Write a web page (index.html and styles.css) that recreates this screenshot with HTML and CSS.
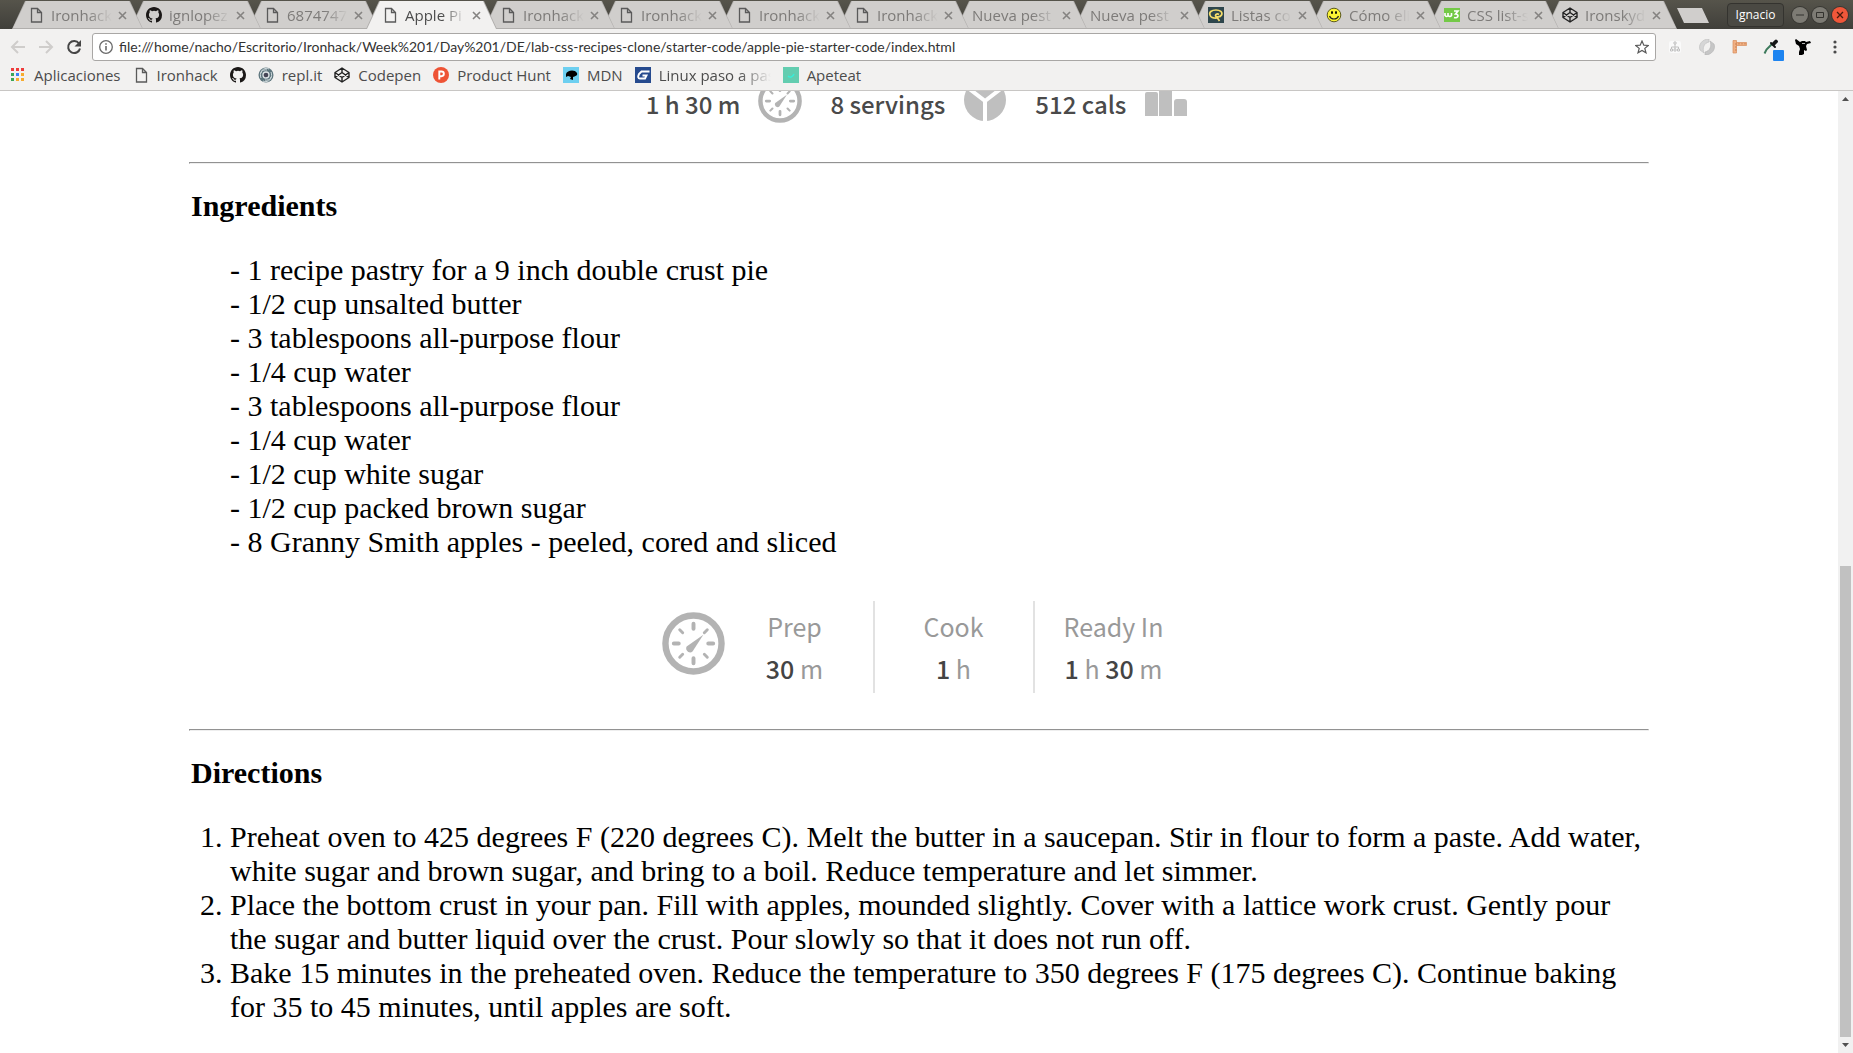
FILE: index.html
```html
<!DOCTYPE html>
<html lang="es">
<head>
<meta charset="utf-8">
<title>Apple Pie</title>
<link rel="stylesheet" href="styles.css">
</head>
<body>
<svg class="defs" aria-hidden="true">
  <symbol id="doc" viewBox="0 0 16 16"><path d="M3.5 1.5h6l4 4v9.500h-10zM9.500 1.500v4h4" fill="none" stroke="#5a5a5a" stroke-width="1.300"/></symbol>
  <symbol id="github" viewBox="0 0 16 16"><path fill="#1b1817" d="M8 0C3.580 0 0 3.580 0 8c0 3.540 2.290 6.530 5.470 7.590.4.070.550-.170.550-.380 0-.190-.010-.820-.010-1.490-2.010.370-2.530-.490-2.690-.940-.090-.230-.480-.940-.820-1.130-.280-.150-.680-.520-.010-.530.630-.010 1.080.580 1.230.820.720 1.210 1.870.870 2.330.660.070-.520.280-.870.510-1.070-1.780-.2-3.640-.890-3.640-3.950 0-.870.310-1.590.820-2.150-.080-.2-.360-1.020.080-2.120 0 0 .670-.210 2.200.820a7.500 7.500 0 0 1 4 0c1.530-1.040 2.200-.820 2.200-.820.440 1.100.160 1.920.080 2.120.510.560.820 1.270.820 2.150 0 3.070-1.870 3.750-3.650 3.950.290.250.540.730.540 1.480 0 1.070-.010 1.930-.010 2.200 0 .210.150.460.550.380A8 8 0 0 0 16 8c0-4.420-3.580-8-8-8z"/></symbol>
  <symbol id="codepen" viewBox="0 0 16 16"><path d="M8 1l7 4.500v5L8 15l-7-4.500v-5zM8 1v4.500M8 15v-4.500M1 5.500l7 5 7-5M1 10.500l7-5 7 5" fill="none" stroke="#222" stroke-width="1.400" stroke-linejoin="round"/></symbol>
  <symbol id="close" viewBox="0 0 9 9"><path d="M1 1l7 7M8 1l-7 7" stroke="#858381" stroke-width="1.600"/></symbol>
  <symbol id="clock" viewBox="0 0 64 64"><circle cx="32" cy="32" r="28.500" fill="none" stroke="#b3b3b3" stroke-width="6.500"/><g stroke="#b3b3b3" stroke-width="4" stroke-linecap="round"><path d="M32 12v5M32 47v5M12 32h5M47 32h5"/><path stroke-width="3" d="M18 18l3 3M43 43l3 3M18 46l3-3M43 21l3-3"/></g><path fill="#b3b3b3" d="M42 23L31 40c-3 3-8-1-6-5z"/></symbol>
</svg>

<header class="browser">
  <div class="titlebar">
    <nav class="tabs" aria-label="Pestañas">
      <div class="tab"><svg class="fav"><use href="#doc"/></svg><span class="title">Ironhack</span><button class="close" aria-label="Cerrar"><svg><use href="#close"/></svg></button></div>
      <div class="tab"><svg class="fav"><use href="#github"/></svg><span class="title">ignlopez</span><button class="close" aria-label="Cerrar"><svg><use href="#close"/></svg></button></div>
      <div class="tab"><svg class="fav"><use href="#doc"/></svg><span class="title">6874747</span><button class="close" aria-label="Cerrar"><svg><use href="#close"/></svg></button></div>
      <div class="tab active"><svg class="fav"><use href="#doc"/></svg><span class="title">Apple Pi</span><button class="close" aria-label="Cerrar"><svg><use href="#close"/></svg></button></div>
      <div class="tab"><svg class="fav"><use href="#doc"/></svg><span class="title">Ironhack</span><button class="close" aria-label="Cerrar"><svg><use href="#close"/></svg></button></div>
      <div class="tab"><svg class="fav"><use href="#doc"/></svg><span class="title">Ironhack</span><button class="close" aria-label="Cerrar"><svg><use href="#close"/></svg></button></div>
      <div class="tab"><svg class="fav"><use href="#doc"/></svg><span class="title">Ironhack</span><button class="close" aria-label="Cerrar"><svg><use href="#close"/></svg></button></div>
      <div class="tab"><svg class="fav"><use href="#doc"/></svg><span class="title">Ironhack</span><button class="close" aria-label="Cerrar"><svg><use href="#close"/></svg></button></div>
      <div class="tab"><span class="title">Nueva pest</span><button class="close" aria-label="Cerrar"><svg><use href="#close"/></svg></button></div>
      <div class="tab"><span class="title">Nueva pest</span><button class="close" aria-label="Cerrar"><svg><use href="#close"/></svg></button></div>
      <div class="tab"><svg class="fav" viewBox="0 0 16 16"><path fill="#2e464c" d="M0 0h16v16H0z"/><path d="M2.500 9C0 5 4 3 8 3s7 2 5.500 5-6 2-6 .5 2-2 3.500-1M2.500 9c1 2.500 5 2 7 2l2 3" fill="none" stroke="#f4dc6a" stroke-width="1.700"/></svg><span class="title">Listas co</span><button class="close" aria-label="Cerrar"><svg><use href="#close"/></svg></button></div>
      <div class="tab"><svg class="fav" viewBox="0 0 16 16"><circle cx="8" cy="8" r="6.800" fill="#fbf335" stroke="#5c5a1c"/><ellipse cx="6" cy="5.500" rx="1" ry="1.600"/><ellipse cx="10" cy="5.500" rx="1" ry="1.600"/><path d="M3.500 9c1.500 4 7.500 4 9 0" fill="none" stroke="#222" stroke-width="1.200"/></svg><span class="title">Cómo eli</span><button class="close" aria-label="Cerrar"><svg><use href="#close"/></svg></button></div>
      <div class="tab"><svg class="fav" viewBox="0 0 16 16"><path fill="#74c947" d="M0 1h16v14H0z"/><path d="M1 6v2.500q2 2 3 0V6v2.500q2 2 3.500 0V6M10 4h4l-2.500 3c4 0 3 5-1.500 3.500" fill="none" stroke="#fff" stroke-width="1.600"/></svg><span class="title">CSS list-s</span><button class="close" aria-label="Cerrar"><svg><use href="#close"/></svg></button></div>
      <div class="tab"><svg class="fav"><use href="#codepen"/></svg><span class="title">Ironskyd</span><button class="close" aria-label="Cerrar"><svg><use href="#close"/></svg></button></div>
    </nav>
    <button class="new-tab" aria-label="Nueva pestaña"></button>
    <div class="window-controls">
      <button class="profile">Ignacio</button>
      <button class="win" aria-label="Minimizar"><svg viewBox="0 0 16 16"><path d="M4 8h8" stroke="#33322e"/></svg></button>
      <button class="win" aria-label="Maximizar"><svg viewBox="0 0 16 16"><path d="M4.500 5.500h7v5h-7z" fill="none" stroke="#33322e"/></svg></button>
      <button class="win quit" aria-label="Cerrar ventana"><svg viewBox="0 0 16 16"><path d="M5 5l6 6M11 5l-6 6" stroke="#4a1a0c" stroke-width="1.300"/></svg></button>
    </div>
  </div>

  <div class="toolbar">
    <button class="nav" aria-label="Atrás"><svg viewBox="0 0 16 16"><path d="M15 8H2M8 2L2 8l6 6" fill="none" stroke="#cfcdcb" stroke-width="2"/></svg></button>
    <button class="nav" aria-label="Adelante"><svg viewBox="0 0 16 16"><path d="M1 8h13M8 2l6 6-6 6" fill="none" stroke="#cfcdcb" stroke-width="2"/></svg></button>
    <button class="nav" aria-label="Recargar"><svg viewBox="0 0 16 16"><path d="M13 4.500A6 6 0 1 0 14 9.500" fill="none" stroke="#454545" stroke-width="2"/><path d="M15 1v6.500H8.500z" fill="#454545"/></svg></button>
    <div class="omnibox">
      <svg class="info" viewBox="0 0 14 14"><circle cx="7" cy="7" r="6.300" fill="none" stroke="#6a6a6a" stroke-width="1.300"/><path d="M7 6v4.500M7 3.300v1.500" stroke="#6a6a6a" stroke-width="1.600"/></svg>
      <input class="url" type="text" aria-label="Dirección" value="file:///home/nacho/Escritorio/Ironhack/Week%201/Day%201/DE/lab-css-recipes-clone/starter-code/apple-pie-starter-code/index.html">
      <button class="star" aria-label="Añadir a marcadores"><svg viewBox="0 0 14 14"><path d="M7 1l1.800 4.200 4.500.3-3.500 2.900 1.200 4.400L7 10.400l-4 2.400 1.200-4.400L.7 5.500l4.500-.3z" fill="none" stroke="#5a5a5a" stroke-width="1.200"/></svg></button>
    </div>
    <div class="extensions">
      <button class="ext" aria-label="Mapa"><svg viewBox="0 0 16 16"><rect x="2" y="2" width="12" height="12" rx="2" fill="#fafafa"/><path d="M8 5v5M4.500 10V8h7v2" fill="none" stroke="#c0c0c0"/><path d="M7 3h2v2H7zM3.500 10h2v2h-2zM7 10h2v2H7zM10.500 10h2v2h-2z" fill="#fff" stroke="#c0c0c0"/></svg></button>
      <button class="ext" aria-label="Sincronizar"><svg viewBox="0 0 16 16"><path d="M10 0C3 0-1 6 1 11l4 3C3 9 5 4 10 3z" fill="#d6d6d6" stroke="#bcbcbc" stroke-width=".6"/><path d="M6 16c7 0 11-6 9-11l-4-3c2 5 0 10-5 11z" fill="#c6c6c6" stroke="#b4b4b4" stroke-width=".6"/></svg></button>
      <button class="ext" aria-label="Regla"><svg viewBox="0 0 16 16"><path d="M5 3.500h10.500v3H5z" fill="#f0b083" stroke="#d98c5c" stroke-width=".7"/><path d="M2 1.500h3.500V14H2z" fill="#f0b083" stroke="#d98c5c" stroke-width=".7"/><path d="M8 4v1.500M11 4v1.500M14 4v1.500M4 5h1.500M4 8h1.500M4 11h1.500" stroke="#b86b3e" stroke-width=".7"/></svg></button>
      <button class="ext picker" aria-label="Cuentagotas"><svg viewBox="0 0 16 16"><path d="M1.500 14.500l2-4L9 5" fill="none" stroke="#3e7a5c" stroke-width="2"/><path d="M8 4l4 4" stroke="#151515" stroke-width="2" stroke-linecap="round"/><path d="M10.500 5l2.500-2.500" stroke="#151515" stroke-width="3.800" stroke-linecap="round"/></svg></button>
      <button class="ext" aria-label="Ninja"><svg viewBox="0 0 16 16"><path d="M1 0l4 3 2-1h3l1 1 4-1 1 2-4 1-1 2 1 4-1 1-2-1 0 4-2 1-3 0 0-3 1-3-1-3-3-2-1-4z"/><path d="M7 4.500h3" stroke="#fff" stroke-width=".7"/></svg></button>
      <button class="ext" aria-label="Menú"><svg viewBox="0 0 16 16"><g fill="#4a4a4a"><circle cx="8" cy="3" r="1.600"/><circle cx="8" cy="8" r="1.600"/><circle cx="8" cy="13" r="1.600"/></g></svg></button>
    </div>
  </div>

  <nav class="bookmarks" aria-label="Marcadores">
    <a href="#"><svg viewBox="0 0 16 16"><path fill="#ee3b3b" d="M1 1h3v3H1zM6 1h3v3H6zM11 1h3v3h-3z"/><path fill="#3aa757" d="M1 6h3v3H1zM1 11h3v3H1z"/><path fill="#3b82f6" d="M6 6h3v3H6z"/><path fill="#f7ac2f" d="M11 6h3v3h-3zM6 11h3v3H6zM11 11h3v3h-3z"/></svg><span>Aplicaciones</span></a>
    <a href="#"><svg><use href="#doc"/></svg><span>Ironhack</span></a>
    <a href="#" aria-label="GitHub"><svg><use href="#github"/></svg></a>
    <a href="#"><svg viewBox="0 0 16 16"><circle cx="8" cy="8" r="7.500" fill="#5d757d"/><circle cx="8" cy="8" r="3" fill="#445" stroke="#dde4e6" stroke-width="1.300"/><path d="M3 11C1 6 4 2 9 3M13 5c2 5-1 9-6 8M5 14c4 2 8-1 8-4M11 2C7 0 3 3 3 6" fill="none" stroke="#d4dde0"/></svg><span>repl.it</span></a>
    <a href="#"><svg><use href="#codepen"/></svg><span>Codepen</span></a>
    <a href="#"><svg viewBox="0 0 16 16"><circle cx="8" cy="8" r="8" fill="#ee5335"/><path d="M6.300 12.500v-8h2.200a2.200 2.200 0 0 1 0 4.700H6.300" fill="none" stroke="#fff" stroke-width="1.900"/></svg><span>Product Hunt</span></a>
    <a href="#"><svg viewBox="0 0 16 16"><path fill="#6dcff0" d="M0 0h16v16H0z"/><path d="M3 7c1-4 9-5 11-1 1 3-2 3-4 4v3L7 12l1-2-3-1-2 1z"/></svg><span>MDN</span></a>
    <a href="#"><svg viewBox="0 0 16 16"><path fill="#264a8e" d="M0 0h16v16H0z"/><path d="M14.500 4.500H6.500L4 7q-2 4.500 1 4.500h5l1.500-3H7.500" fill="none" stroke="#fff" stroke-width="1.900"/></svg><span class="long">Linux paso a pas</span></a>
    <a href="#"><svg viewBox="0 0 16 16"><path fill="#63cdb0" d="M0 0h16v16H0z"/><path d="M5 9c2 2 5 1 6-2" fill="none" stroke="#35f0dc" stroke-width="1.300"/></svg><span>Apeteat</span></a>
  </nav>
</header>

<div class="viewport">
  <main class="page">
    <div class="summary">
      <div class="fact"><span>1 h 30 m</span><svg><use href="#clock"/></svg></div>
      <div class="fact"><span>8 servings</span><svg viewBox="0 0 44 44"><circle cx="22" cy="21" r="21" fill="#bfbfbf"/><path d="M22 44V22L0 5M22 22L44 5" fill="none" stroke="#fff" stroke-width="4"/></svg></div>
      <div class="fact"><span>512 cals</span><svg viewBox="0 0 44 44"><path fill="#bfbfbf" d="M1 37V15q0-2 2-2h9q2 0 2 2v22zM15 37V6h13v31zM30 37V23q0-3 3-3h7q3 0 3 3v14z"/></svg></div>
    </div>
    <hr>
    <section>
      <h2>Ingredients</h2>
      <ul class="ingredients">
        <li>- 1 recipe pastry for a 9 inch double crust pie</li>
        <li>- 1/2 cup unsalted butter</li>
        <li>- 3 tablespoons all-purpose flour</li>
        <li>- 1/4 cup water</li>
        <li>- 3 tablespoons all-purpose flour</li>
        <li>- 1/4 cup water</li>
        <li>- 1/2 cup white sugar</li>
        <li>- 1/2 cup packed brown sugar</li>
        <li>- 8 Granny Smith apples - peeled, cored and sliced</li>
      </ul>
    </section>
    <div class="times">
      <svg><use href="#clock"/></svg>
      <div class="time"><span>Prep</span><span><b>30</b> m</span></div>
      <div class="time"><span>Cook</span><span><b>1</b> h</span></div>
      <div class="time"><span>Ready In</span><span><b>1</b> h <b>30</b> m</span></div>
    </div>
    <hr>
    <section>
      <h2>Directions</h2>
      <ol class="directions">
        <li>Preheat oven to 425 degrees F (220 degrees C). Melt the butter in a saucepan. Stir in flour to form a paste. Add water, white sugar and brown sugar, and bring to a boil. Reduce temperature and let simmer.</li>
        <li>Place the bottom crust in your pan. Fill with apples, mounded slightly. Cover with a lattice work crust. Gently pour the sugar and butter liquid over the crust. Pour slowly so that it does not run off.</li>
        <li>Bake 15 minutes in the preheated oven. Reduce the temperature to 350 degrees F (175 degrees C). Continue baking for 35 to 45 minutes, until apples are soft.</li>
      </ol>
    </section>
  </main>
  <div class="scrollbar" aria-hidden="true">
    <svg viewBox="0 0 15 16"><path d="M4 10h7l-3.500-4z" fill="#505050"/></svg>
    <div class="track"><div class="thumb"></div></div>
    <svg viewBox="0 0 15 16"><path d="M4 6h7l-3.500 4z" fill="#505050"/></svg>
  </div>
</div>
</body>
</html>
```
FILE: styles.css
```css
* { box-sizing: border-box; }

body {
  margin: 0;
  height: 100vh;
  display: flex;
  flex-direction: column;
  overflow: hidden;
  background: #fff;
}

button {
  border: 0;
  padding: 0;
  background: none;
  font: inherit;
  color: inherit;
}

svg { display: block; flex: none; }
.defs { position: absolute; width: 0; height: 0; }

/* Browser frame */
.browser {
  flex: none;
  font: 15px/20px "Open Sans", "Noto Sans", sans-serif;
  color: #4c4c4c;
  background: #f2f1f0;
  border-bottom: 1px solid #c8c6c4;
}

.titlebar {
  display: flex;
  height: 29px;
  padding: 1px 5px 0 12px;
  background: linear-gradient(#56544b, #403f3a);
}

.tabs { display: flex; min-width: 0; }

.tab {
  position: relative;
  isolation: isolate;
  width: 131px;
  min-width: 0;
  display: flex;
  align-items: center;
  padding: 0 16px;
  margin-right: -13px;
  color: #7d7b79;
}
.tab:last-child { margin-right: 0; }

.tab::before,
.tab::after {
  content: "";
  position: absolute;
  inset: 0;
  z-index: -1;
  background: #b0aeac;
  clip-path: polygon(0 100%, 13px 0, calc(100% - 13px) 0, 100% 100%);
}
.tab::after { inset: 0 1px 1px; background: #d0cecc; }

.tab:nth-child(1) { z-index: 14; }
.tab:nth-child(2) { z-index: 13; }
.tab:nth-child(3) { z-index: 12; }
.tab:nth-child(4) { z-index: 20; }
.tab:nth-child(5) { z-index: 10; }
.tab:nth-child(6) { z-index: 9; }
.tab:nth-child(7) { z-index: 8; }
.tab:nth-child(8) { z-index: 7; }
.tab:nth-child(9) { z-index: 6; }
.tab:nth-child(10) { z-index: 5; }
.tab:nth-child(11) { z-index: 4; }
.tab:nth-child(12) { z-index: 3; }
.tab:nth-child(13) { z-index: 2; }

.tab.active { color: #4c4c4c; }
.tab.active::after { inset: 0 1px; background: #f2f1f0; }

.fav { width: 16px; height: 16px; margin-right: 7px; }

.title {
  flex: 1;
  white-space: nowrap;
  mask-image: linear-gradient(to left, transparent 6px, #000 30px);
}

.close svg { width: 9px; height: 9px; }

.new-tab {
  flex: none;
  width: 32px;
  height: 15px;
  margin-top: 7px;
  background: #d0cecc;
  clip-path: polygon(0 0, 25px 0, 100% 100%, 7px 100%);
}

.window-controls {
  flex: none;
  display: flex;
  align-items: center;
  gap: 4px;
  margin-left: auto;
}

.profile {
  height: 24px;
  width: 57px;
  margin-right: 4px;
  border: 1px solid #34332f;
  border-radius: 4px;
  background: #4a4943;
  color: #fff;
  font-size: 12px;
}

.win {
  width: 16px;
  height: 16px;
  border-radius: 50%;
  background: #7d7b74;
  box-shadow: 0 0 0 1px #383733;
}
.quit { background: #f0573a; }

.toolbar {
  display: flex;
  align-items: center;
  padding: 4px 10px 0;
}

.nav { width: 16px; margin-right: 12px; }
.nav svg { width: 16px; height: 16px; }
.nav:nth-child(3) { margin-right: 10px; }

.omnibox {
  flex: 1;
  display: flex;
  align-items: center;
  height: 28px;
  padding: 0 6px;
  border: 1px solid #a9a7a5;
  border-radius: 3px;
  background: #fff;
}
.info { width: 14px; height: 14px; }

.url {
  flex: 1;
  min-width: 0;
  padding: 0 6px;
  border: 0;
  outline: 0;
  background: none;
  font: 14px/20px Lato, "Open Sans", sans-serif;
  color: #333;
}
.star svg { width: 14px; height: 14px; }

.extensions { display: flex; gap: 16px; margin-left: 11px; }
.ext svg { width: 16px; height: 16px; }

.picker { position: relative; }
.picker::after {
  content: "";
  position: absolute;
  right: -5px;
  bottom: -6px;
  width: 11px;
  height: 11px;
  border-radius: 1px;
  background: #1e84f0;
}

.bookmarks {
  display: flex;
  align-items: center;
  gap: 12px;
  height: 29px;
  padding: 0 10px 2px;
}
.bookmarks a {
  display: flex;
  align-items: center;
  gap: 8px;
  color: inherit;
  text-decoration: none;
}
.bookmarks svg { width: 16px; height: 16px; }

.long {
  width: 112px;
  white-space: nowrap;
  mask-image: linear-gradient(to left, transparent, #000 32px);
}

/* Recipe page */
.viewport {
  flex: 1;
  min-height: 0;
  display: flex;
}

.page {
  flex: 1;
  overflow: hidden;
  padding: 0 189px;
  font: 30px/34px "Liberation Serif", serif;
  color: #000;
}

hr {
  margin: 0 0 25px;
  border: 1px solid;
  border-color: #929292 #eee #eee #929292;
}

h2 {
  margin: 0 0 30px;
  padding-left: 2px;
  font-size: inherit;
}

.ingredients,
.directions {
  margin: 0;
  padding-left: 41px;
}
.ingredients { list-style: none; }

.summary,
.times {
  display: flex;
  justify-content: center;
  font-family: "Noto Sans CJK JP", "Open Sans", sans-serif;
  font-size: 25px;
}

.summary {
  gap: 28px;
  margin: -12px 0 39px;
  padding-right: 4px;
  color: #4a4a4a;
  font-size: 24px;
  font-weight: 500;
  line-height: 26px;
}
.fact { display: flex; gap: 18px; }
.fact span { padding-top: 12px; }
.fact svg { width: 44px; height: 44px; }

.times {
  margin: 42px 0 36px;
  padding-left: 16px;
  line-height: 42px;
  color: #999;
}
.times svg { width: 63px; height: 63px; margin-top: 11px; }

.time {
  width: 160px;
  padding: 4px 0;
  display: flex;
  flex-direction: column;
  align-items: center;
}
.time:nth-child(2) { width: 148px; padding-right: 8px; }
.time + .time { border-left: 2px solid #e2e2e2; }
.time b { font-weight: 500; color: #444; }

/* Scrollbar */
.scrollbar {
  flex: none;
  width: 15px;
  display: flex;
  flex-direction: column;
  background: #f1f1f1;
}
.scrollbar svg { width: 15px; height: 16px; }

.track {
  flex: 1;
  display: grid;
  grid-template-rows: 459fr 471fr;
  padding: 0 2px;
}
.thumb { grid-row: 2; background: #c1c1c1; }
```
